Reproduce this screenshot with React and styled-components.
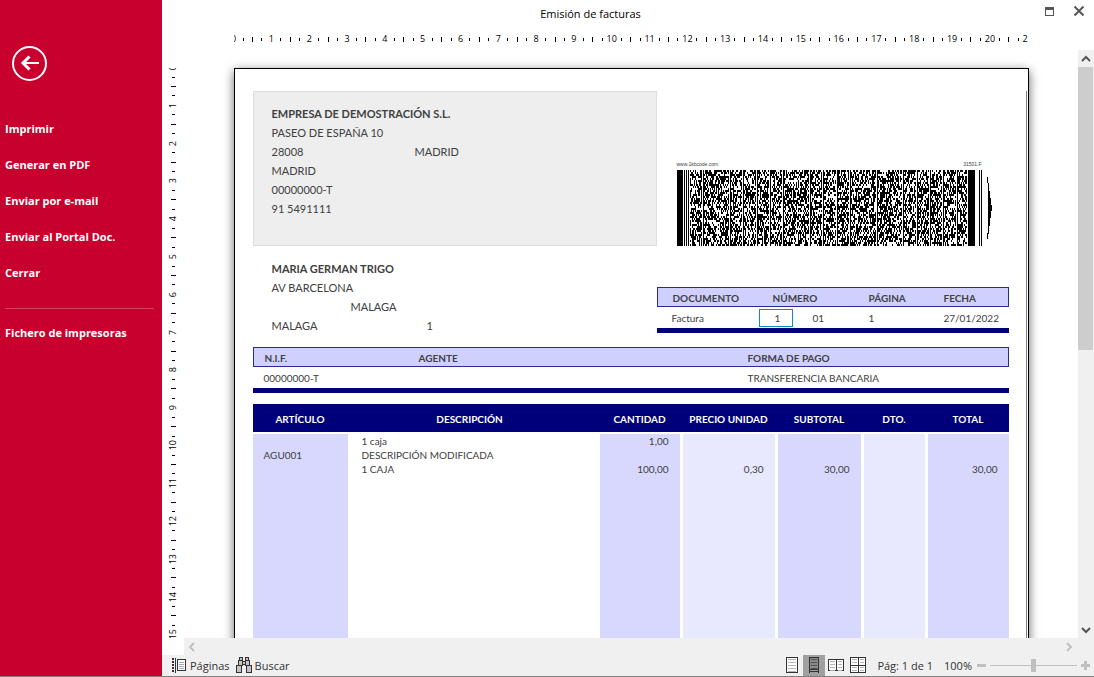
import React from "react";
import styled, { createGlobalStyle } from "styled-components";

const GlobalStyle = createGlobalStyle`
  * {
    box-sizing: border-box;
  }

  body {
    margin: 0;
    background: #fff;
    font-family: "Open Sans", "Noto Sans", sans-serif;
    font-size: 11px;
    color: #000;
  }
`

const Window = styled.div`
  display: flex;
  height: 100vh;
  overflow: hidden;
  border-bottom: 1px solid #808080;
`

const Sidebar = styled.nav`
  flex: 0 0 162px;
  background: #c8002d;
  padding: 46px 8px 0 5px;
`

const BackButton = styled.button`
  display: block;
  width: 35px;
  height: 35px;
  margin: 0 0 29px 7px;
  padding: 0;
  border: none;
  background: none;
  cursor: pointer;
`

const MenuItem = styled.button`
  display: block;
  width: 100%;
  height: 36px;
  padding: 0;
  border: none;
  background: none;
  color: #fff;
  font: 700 11px "Open Sans", sans-serif;
  text-align: left;
  cursor: pointer;
`

const MenuDivider = styled.hr`
  margin: 18px 0 5px;
  border: none;
  border-top: 1px solid #d5405c;
`

const Main = styled.main`
  flex: 1;
  min-width: 0;
  display: flex;
  flex-direction: column;
`

const TitleBar = styled.header`
  display: grid;
  grid-template-columns: 1fr auto 1fr;
  align-items: center;
  height: 28px;
  padding: 0 9px 0 0;
`

const Title = styled.h1`
  grid-column: 2;
  margin: 0;
  padding: 0 66px 2px 0;
  font-size: 11px;
  font-weight: 400;
`

const WindowButtons = styled.div`
  display: flex;
  justify-content: flex-end;
  align-items: center;
  gap: 19px;
  padding-bottom: 6px;
`

const IconButton = styled.button`
  display: flex;
  align-items: center;
  justify-content: center;
  padding: 0;
  border: none;
  background: none;
  cursor: pointer;
`

const RulerRow = styled.div`
  display: flex;
  justify-content: center;
  height: 22px;
  padding: 0 16px 0 22px;
`

const HRuler = styled.div`
  flex: 0 0 794px;
  overflow: hidden;
`

const HRulerScale = styled.div`
  display: flex;
  width: 832px;
  height: 22px;
  margin-left: -24px;
`

const VRuler = styled.div`
  flex: 0 0 22px;
  overflow: hidden;
  margin-top: 18px;
`

const VRulerScale = styled.div`
  display: flex;
  flex-direction: column;
  width: 22px;
  height: 756px;
  margin-top: -24px;
`

const RulerCell = styled.div`
  flex: 1 1 0;
  min-width: 0;
  min-height: 0;
  display: grid;
  ${(props) => (props.$vertical ? "grid-template-rows" : "grid-template-columns")}: repeat(4, minmax(0, 1fr));
  place-items: center;
  font-size: 9px;
  line-height: 10px;
  white-space: nowrap;
`

const RulerLabel = styled.span`
  writing-mode: ${(props) => (props.$vertical ? "vertical-rl" : "horizontal-tb")};
  transform: ${(props) => (props.$vertical ? "rotate(180deg)" : "none")};
`

const Tick = styled.i`
  background: #000;
  width: ${(props) => (props.$vertical ? props.$size : 1)}px;
  height: ${(props) => (props.$vertical ? 1 : props.$size)}px;
`

const Workspace = styled.div`
  flex: 1;
  min-height: 0;
  display: flex;
`

const Canvas = styled.div`
  flex: 1;
  min-width: 0;
  display: flex;
  justify-content: center;
  align-items: flex-start;
  overflow: hidden;
  padding-top: 18px;
`

const VScroll = styled.div`
  flex: 0 0 16px;
  display: flex;
  flex-direction: column;
  background: #f0f0f0;
`

const ScrollButton = styled(IconButton)`
  width: ${(props) => props.$width || 16}px;
  height: 17px;
`

const ScrollTrack = styled.div`
  flex: 1;
`

const ScrollThumb = styled.div`
  width: 15px;
  height: 51%;
  background: #cdcdcd;
`

const HScroll = styled.div`
  flex: 0 0 17px;
  display: flex;
  justify-content: space-between;
  margin-left: 22px;
  background: #f0f0f0;
`

const Paper = styled.article`
  flex: 0 0 794px;
  min-height: 1123px;
  padding: 22px 1px 0 18px;
  border: 1px solid #000;
  background: #fff;
  box-shadow: 0 3px 10px rgba(0, 0, 0, 0.6);
  font-family: Lato, "Liberation Sans", sans-serif;
  font-size: 11px;
  color: #404040;
`

const PrintArea = styled.div`
  min-height: 1000px;
  padding-right: 17px;
  border-right: 1px solid #808080;
`

const Columns = styled.div`
  display: grid;
  grid-template-columns: 404px 1fr;
  align-items: start;
`

const Party = styled.section`
  height: ${(props) => (props.$boxed ? 155 : 101)}px;
  padding: 12px 18px;
  border: 1px solid ${(props) => (props.$boxed ? "#dcdcdc" : "transparent")};
  background: ${(props) => (props.$boxed ? "#eee" : "none")};
`

const PartyLine = styled.div`
  display: grid;
  grid-template-columns: ${(props) => (props.$first ? `${props.$first}px 1fr` : "1fr")};
  height: 19px;
  line-height: 19px;
  font-weight: ${(props) => (props.$bold ? 700 : 400)};
`

const BarcodeBox = styled.div`
  padding: 68px 0 0 20px;
`

const BarcodeCaption = styled.div`
  display: flex;
  justify-content: space-between;
  width: 305px;
  height: 11px;
  font: 5px/10px "Liberation Sans", sans-serif;
`

const Summary = styled.table`
  width: 100%;
  margin-top: ${(props) => props.$top}px;
  border-collapse: separate;
  border-spacing: 0;
  table-layout: fixed;
  font-size: 10px;
  line-height: 12px;

  th {
    height: 20px;
    padding: 2px 0 0 ${(props) => props.$inset}px;
    border: solid #2a2a96;
    border-width: 1px 0;
    background: #d0d0ff;
    text-align: left;
  }

  th:first-child {
    border-left-width: 1px;
  }

  th:last-child {
    border-right-width: 1px;
  }

  td {
    height: 26px;
    padding: 0 0 0 ${(props) => props.$inset}px;
    border-bottom: 5px solid #00007b;
  }
`

const NumberField = styled.div`
  display: flex;
  align-items: center;
  gap: 20px;
  margin-left: -14px;
`

const NumberInput = styled.input`
  width: 34px;
  height: 18px;
  padding: 0 0 0 4px;
  border: 1px solid #1883c4;
  background: #fff;
  color: inherit;
  font: inherit;
  text-align: center;
`

const Items = styled.table`
  width: 100%;
  margin-top: 11px;
  border-collapse: separate;
  border-spacing: 0;
  table-layout: fixed;
  font-size: 10px;
  line-height: 12px;
`

const HeadCell = styled.th`
  height: 28px;
  padding: 2px ${(props) => props.$shift || 0}px 0 0;
  border-right: ${(props) => (props.$gap ? 3 : 0)}px solid #00007b;
  background: #00007b;
  color: #fff;
  white-space: nowrap;
`

const tones = { mid: "#d8d8ff", light: "#e8e8ff", none: "#fff" }

const Cell = styled.td`
  height: 14px;
  padding: 0 11px 0 ${(props) => (props.$tone === "none" ? 14 : 11)}px;
  border-right: ${(props) => (props.$gap ? 3 : 0)}px solid #fff;
  background: ${(props) => tones[props.$tone]};
  text-align: ${(props) => (props.$right ? "right" : "left")};
`

const SpacerCell = styled.td`
  height: 2px;
  padding: 0;
`

const FillCell = styled(Cell)`
  height: 640px;
`

const StatusBar = styled.footer`
  flex: 0 0 21px;
  display: flex;
  justify-content: space-between;
  padding: 0 4px 0 10px;
  background: #f0f0f0;
  color: #333;
  line-height: 19px;
`

const StatusGroup = styled.div`
  display: flex;
  align-items: center;
`

const StatusButton = styled.button`
  display: flex;
  align-items: center;
  gap: 3px;
  height: 21px;
  padding: 0 0 1px;
  margin-right: 6px;
  border: none;
  background: none;
  color: inherit;
  font: inherit;
`

const ViewButton = styled(IconButton)`
  width: 22px;
  height: 21px;
  background: ${(props) => (props.$active ? "#a0a0a0" : "none")};
`

const StatusText = styled.span`
  padding-bottom: 1px;
  margin: 0 ${(props) => props.$right || 0}px 0 ${(props) => props.$left}px;
`

const Zoom = styled.input`
  appearance: none;
  width: 87px;
  height: 14px;
  margin: 0 4px;
  background: linear-gradient(#c0c0c0, #c0c0c0) center / 100% 1px no-repeat;

  &::-webkit-slider-thumb {
    appearance: none;
    width: 5px;
    height: 13px;
    background: #c0c0c0;
  }
`

const menu = ["Imprimir", "Generar en PDF", "Enviar por e-mail", "Enviar al Portal Doc.", "Cerrar"]

const columns = [
  { name: "ARTÍCULO", width: 95, tone: "mid" },
  { name: "DESCRIPCIÓN", width: 252, tone: "none", shift: 8 },
  { name: "CANTIDAD", width: 83, tone: "mid", gap: true, right: true },
  { name: "PRECIO UNIDAD", width: 95, tone: "light", gap: true, right: true },
  { name: "SUBTOTAL", width: 86, tone: "mid", gap: true, right: true },
  { name: "DTO.", width: 64, tone: "light", gap: true, right: true },
  { name: "TOTAL", width: 81, tone: "mid", right: true },
]

const rows = [
  ["", "1 caja", "1,00", "", "", "", ""],
  ["AGU001", "DESCRIPCIÓN MODIFICADA", "", "", "", "", ""],
  ["", "1 CAJA", "100,00", "0,30", "30,00", "", "30,00"],
]

const Scale = ({ count, vertical }) =>
  Array.from({ length: count }, (_, n) => (
    <RulerCell key={n} $vertical={vertical}>
      <Tick $size={5} $vertical={vertical} />
      <Tick $size={3} $vertical={vertical} />
      <RulerLabel $vertical={vertical}>{n}</RulerLabel>
      <Tick $size={3} $vertical={vertical} />
    </RulerCell>
  ))

// Random modules, with a white/black guard pair every 40/3 px
const barcodePath = () => {
  let seed = 31501
  const random = () => {
    seed = (seed * 1103515245 + 12345) % 2147483648
    return seed / 2147483648
  }
  const guards = {}
  for (let i = 1; i < 21; i++) {
    guards[Math.round(13 + (i * 40) / 3)] = ![2, 8, 13, 15].includes(i)
  }
  let d = ""
  for (let x = 13; x < 290; x++) {
    if (guards[x]) {
      d += `M${x} 0h1v76h-1z`
      continue
    }
    if (guards[x + 1]) continue
    for (let y = 0; y < 76; y += 2) {
      if (random() < 0.56) d += `M${x} ${y}h1v2h-1z`
    }
  }
  return d
}

const modules = barcodePath()

const BarcodeImage = styled.svg`
  display: block;
`

const Barcode = () => (
  <BarcodeImage width="317" height="76" viewBox="0 0 317 76" shapeRendering="crispEdges">
    <path d="M0 0h6v76h-6zM7 0h1v76h-1zM9 0h1v76h-1zM11 0h1v76h-1zM291 0h7v76h-7zM302 0h1v76h-1zM304 0h1v76h-1z" />
    <path d={modules} />
    <path d="M310 7h1v6h1v8h1v7h1v7h1v6h-1v7h-1v8h-1v8h-1v5h-1v-6h1V13h-1z" />
  </BarcodeImage>
)

const Chevron = ({ d, color }) => (
  <svg width="10" height="10" viewBox="0 0 10 10" fill="none" stroke={color} strokeWidth="2">
    <path d={d} />
  </svg>
)

const PagesIcon = () => (
  <svg width="15" height="15" viewBox="0 0 15 15" shapeRendering="crispEdges">
    <path d="M0 0h2v2H0zM0 3h2v2H0zM0 6h2v2H0zM0 9h2v2H0zM0 12h2v2H0zM3 0h1v15H3z" fill="#333" />
    <path d="M5.500 1.500h8v11h-8z" fill="#fff" stroke="#333" />
    <path d="M7 4h5v1H7zM7 6h5v1H7zM7 8h5v1H7zM7 10h5v1H7z" fill="#aaa" />
  </svg>
)

const BinocularsIcon = () => (
  <svg width="16" height="16" viewBox="0 0 16 16" shapeRendering="crispEdges" fill="#c4c4c4" stroke="#333">
    <path d="M2.500 3.500h4v5h-4zM9.500 3.500h4v5h-4z" />
    <path d="M3.500.500h3v3h-3zM9.500.500h3v3h-3zM6.500 4.500h3v3h-3z" />
    <path d="M.500 8.500h5v7h-5zM10.500 8.500h5v7h-5z" />
  </svg>
)

const Sheet = ({ x, y, w, h, fill = "#fff", line = "#b4b4b4" }) => (
  <>
    <rect x={x + 0.5} y={y + 0.5} width={w - 1} height={h - 1} fill={fill} stroke="#333" />
    {Array.from({ length: Math.floor((h - 3) / 3) + 1 }, (_, i) => (
      <rect key={i} x={x + 2} y={y + 2 + i * 3} width={w - 4} height="1" fill={line} />
    ))}
  </>
)

const ViewIcon = ({ children }) => (
  <svg width="18" height="17" viewBox="0 0 18 17" shapeRendering="crispEdges">
    {children}
  </svg>
)

export class App extends React.Component {
  render() {
    return (
      <Window>
        <GlobalStyle />
        <Sidebar>
          <BackButton aria-label="Volver">
            <svg width="35" height="35" viewBox="0 0 35 35" fill="none" stroke="#fff">
              <circle cx="17.500" cy="17.500" r="16.500" strokeWidth="2" />
              <path d="M27 17H11" strokeWidth="2" />
              <path d="M17.500 10.500L11 17l6.500 6.500" strokeWidth="3" />
            </svg>
          </BackButton>
          {menu.map((item) => (
            <MenuItem key={item}>{item}</MenuItem>
          ))}
          <MenuDivider />
          <MenuItem>Fichero de impresoras</MenuItem>
        </Sidebar>
        <Main>
          <TitleBar>
            <Title>Emisión de facturas</Title>
            <WindowButtons>
              <IconButton aria-label="Maximizar">
                <svg width="9" height="9" viewBox="0 0 9 9" shapeRendering="crispEdges" fill="#555">
                  <path d="M0 0h9v9H0zM1 3v5h7V3z" fillRule="evenodd" />
                </svg>
              </IconButton>
              <IconButton aria-label="Cerrar ventana">
                <svg width="12" height="10" viewBox="0 0 12 10" stroke="#555" strokeWidth="2">
                  <path d="M1.500.500l9 9M10.500.500l-9 9" />
                </svg>
              </IconButton>
            </WindowButtons>
          </TitleBar>
          <RulerRow>
            <HRuler>
              <HRulerScale>
                <Scale count={22} />
              </HRulerScale>
            </HRuler>
          </RulerRow>
          <Workspace>
            <VRuler>
              <VRulerScale>
                <Scale count={20} vertical />
              </VRulerScale>
            </VRuler>
            <Canvas>
              <Paper>
                <PrintArea>
                  <Columns>
                    <Party $boxed>
                      <PartyLine $bold>EMPRESA DE DEMOSTRACIÓN S.L.</PartyLine>
                      <PartyLine>PASEO DE ESPAÑA 10</PartyLine>
                      <PartyLine $first={143}>
                        <span>28008</span>
                        <span>MADRID</span>
                      </PartyLine>
                      <PartyLine>MADRID</PartyLine>
                      <PartyLine>00000000-T</PartyLine>
                      <PartyLine>91 5491111</PartyLine>
                    </Party>
                    <BarcodeBox>
                      <BarcodeCaption>
                        <span>www.1kbcode.com</span>
                        <span>31501.F</span>
                      </BarcodeCaption>
                      <Barcode />
                    </BarcodeBox>
                    <Party>
                      <PartyLine $bold>MARIA GERMAN TRIGO</PartyLine>
                      <PartyLine>AV BARCELONA</PartyLine>
                      <PartyLine $first={79}>
                        <span />
                        <span>MALAGA</span>
                      </PartyLine>
                      <PartyLine $first={155}>
                        <span>MALAGA</span>
                        <span>1</span>
                      </PartyLine>
                    </Party>
                    <Summary $top={41} $inset={15}>
                      <colgroup>
                        <col width="101" />
                        <col width="96" />
                        <col width="75" />
                        <col />
                      </colgroup>
                      <thead>
                        <tr>
                          <th>DOCUMENTO</th>
                          <th>NÚMERO</th>
                          <th>PÁGINA</th>
                          <th>FECHA</th>
                        </tr>
                      </thead>
                      <tbody>
                        <tr>
                          <td>Factura</td>
                          <td>
                            <NumberField>
                              <NumberInput aria-label="Número" defaultValue="1" />
                              <span>01</span>
                            </NumberField>
                          </td>
                          <td>1</td>
                          <td>27/01/2022</td>
                        </tr>
                      </tbody>
                    </Summary>
                  </Columns>
                  <Summary $top={0} $inset={11}>
                    <colgroup>
                      <col width="155" />
                      <col width="329" />
                      <col />
                    </colgroup>
                    <thead>
                      <tr>
                        <th>N.I.F.</th>
                        <th>AGENTE</th>
                        <th>FORMA DE PAGO</th>
                      </tr>
                    </thead>
                    <tbody>
                      <tr>
                        <td>00000000-T</td>
                        <td />
                        <td>TRANSFERENCIA BANCARIA</td>
                      </tr>
                    </tbody>
                  </Summary>
                  <Items>
                    <colgroup>
                      {columns.map((c) => (
                        <col key={c.name} width={c.width} />
                      ))}
                    </colgroup>
                    <thead>
                      <tr>
                        {columns.map((c) => (
                          <HeadCell key={c.name} $gap={c.gap} $shift={c.shift}>
                            {c.name}
                          </HeadCell>
                        ))}
                      </tr>
                    </thead>
                    <tbody>
                      <tr>
                        <SpacerCell colSpan={7} />
                      </tr>
                      {rows.map((row, r) => (
                        <tr key={r}>
                          {columns.map((c, i) => (
                            <Cell key={c.name} $tone={c.tone} $gap={c.gap} $right={c.right}>
                              {row[i]}
                            </Cell>
                          ))}
                        </tr>
                      ))}
                      <tr>
                        {columns.map((c) => (
                          <FillCell key={c.name} $tone={c.tone} $gap={c.gap} />
                        ))}
                      </tr>
                    </tbody>
                  </Items>
                </PrintArea>
              </Paper>
            </Canvas>
            <VScroll>
              <ScrollButton aria-label="Subir">
                <Chevron d="M1 7l4-4 4 4" color="#555" />
              </ScrollButton>
              <ScrollTrack>
                <ScrollThumb />
              </ScrollTrack>
              <ScrollButton aria-label="Bajar">
                <Chevron d="M1 3l4 4 4-4" color="#555" />
              </ScrollButton>
            </VScroll>
          </Workspace>
          <HScroll>
            <ScrollButton aria-label="Izquierda">
              <Chevron d="M7 1L3 5l4 4" color="#c0c0c0" />
            </ScrollButton>
            <ScrollButton aria-label="Derecha" $width={50}>
              <Chevron d="M3 1l4 4-4 4" color="#c0c0c0" />
            </ScrollButton>
          </HScroll>
          <StatusBar>
            <StatusGroup>
              <StatusButton>
                <PagesIcon />
                Páginas
              </StatusButton>
              <StatusButton>
                <BinocularsIcon />
                Buscar
              </StatusButton>
            </StatusGroup>
            <StatusGroup>
              <ViewButton aria-label="Una página">
                <ViewIcon>
                  <Sheet x={3} y={0} w={12} h={16} />
                </ViewIcon>
              </ViewButton>
              <ViewButton aria-label="Continuo" $active>
                <ViewIcon>
                  <Sheet x={4} y={0} w={10} h={13} fill="#888" line="#555" />
                  <path d="M4 13h1v3H4zM13 13h1v3h-1zM5 14h8v1H5z" fill="#333" />
                </ViewIcon>
              </ViewButton>
              <ViewButton aria-label="Dos páginas">
                <ViewIcon>
                  <Sheet x={1} y={2} w={9} h={12} />
                  <Sheet x={9} y={2} w={8} h={12} />
                </ViewIcon>
              </ViewButton>
              <ViewButton aria-label="Cuatro páginas">
                <ViewIcon>
                  <Sheet x={1} y={0} w={9} h={9} />
                  <Sheet x={9} y={0} w={8} h={9} />
                  <Sheet x={1} y={8} w={9} h={8} />
                  <Sheet x={9} y={8} w={8} h={8} />
                </ViewIcon>
              </ViewButton>
              <StatusText $left={8}>Pág: 1 de 1</StatusText>
              <StatusText $left={11} $right={5}>100%</StatusText>
              <IconButton aria-label="Reducir">
                <svg width="9" height="9" viewBox="0 0 9 9" fill="#c0c0c0">
                  <path d="M0 3h9v3H0z" />
                </svg>
              </IconButton>
              <Zoom type="range" aria-label="Zoom" />
              <IconButton aria-label="Ampliar">
                <svg width="9" height="9" viewBox="0 0 9 9" fill="#c0c0c0">
                  <path d="M3 0h3v3h3v3H6v3H3V6H0V3h3z" />
                </svg>
              </IconButton>
            </StatusGroup>
          </StatusBar>
        </Main>
      </Window>
    );
  }
}

export default App;
